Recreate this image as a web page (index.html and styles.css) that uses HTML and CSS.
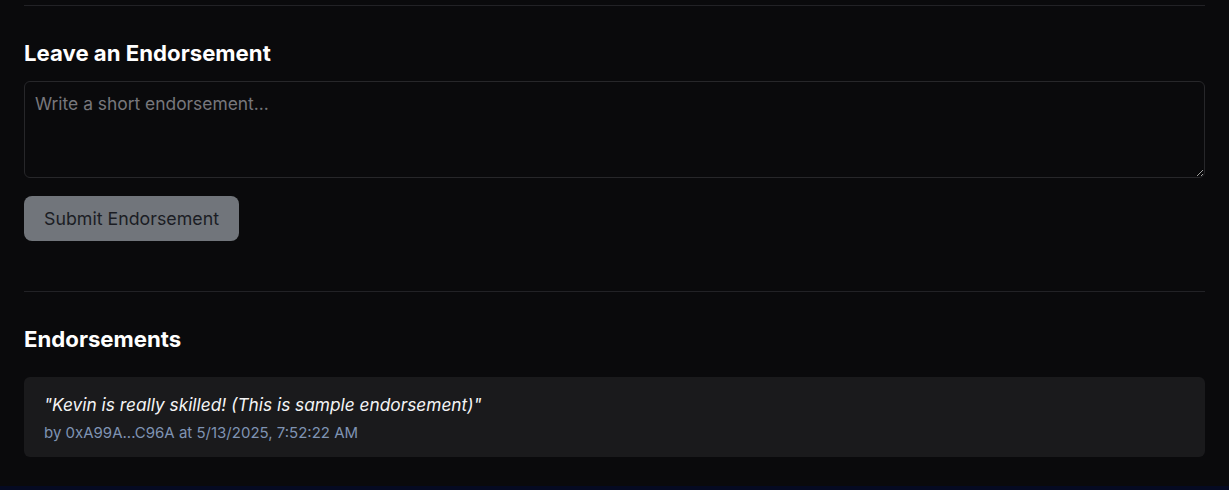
FILE: index.html
```html
<!DOCTYPE html>
<html lang="en">
<head>
<meta charset="utf-8">
<title>Endorsements</title>
<link rel="stylesheet" href="styles.css">
</head>
<body>
<main class="page">
  <section class="section section-form">
    <h2 class="heading">Leave an Endorsement</h2>
    <form class="form">
      <textarea class="input" placeholder="Write a short endorsement..."></textarea>
      <button type="button" class="btn" disabled>Submit Endorsement</button>
    </form>
  </section>
  <section class="section section-list">
    <h2 class="heading heading-list">Endorsements</h2>
    <div class="card">
      <p class="quote">"Kevin is really skilled! (This is sample endorsement)"</p>
      <p class="meta">by 0xA99A...C96A at 5/13/2025, 7:52:22 AM</p>
    </div>
  </section>
</main>
<footer class="footer"></footer>
</body>
</html>
```

FILE: styles.css
```css
* { box-sizing: border-box; }
html, body {
  margin: 0;
  background: #0a0a0c;
  color: #fafafa;
  font-family: Inter, "Noto Sans", sans-serif;
}
.page {
  padding: 5px 24px 0;
}
.section {
  border-top: 1px solid #222226;
}
.section-form {
  padding-top: 33px;
  padding-bottom: 50px;
}
.section-list {
  padding-top: 33px;
  padding-bottom: 29px;
}
.heading {
  margin: 0 0 14px;
  font-size: 22.2px;
  line-height: 28px;
  font-weight: 700;
  color: #ffffff;
}
.heading-list {
  margin-bottom: 24px;
}
.form {
  display: flex;
  flex-direction: column;
  align-items: flex-start;
  gap: 18px;
}
.input {
  display: block;
  width: 100%;
  height: 97px;
  padding: 10px 10px;
  background: #0a0a0c;
  border: 1px solid #27272a;
  border-radius: 6px;
  color: #e4e4e7;
  font-family: Inter, "Noto Sans", sans-serif;
  font-size: 17.4px;
  line-height: 24px;
  resize: vertical;
}
.input::placeholder { color: #77777c; }
.btn {
  height: 45px;
  padding: 0 20px;
  border: none;
  border-radius: 8px;
  background: #71757b;
  color: #1b1d24;
  font-family: Inter, "Noto Sans", sans-serif;
  font-size: 17.8px;
  line-height: 24px;
}
.card {
  background: #1a1a1c;
  border-radius: 6px;
  padding: 16px 20px 14px;
}
.quote {
  margin: 0 0 6px;
  font-style: italic;
  font-size: 17.3px;
  line-height: 24px;
  color: #f4f4f5;
}
.meta {
  margin: 0;
  font-size: 15px;
  line-height: 20px;
  color: #7f93b3;
}
.footer {
  height: 6px;
  background: #050a22;
}
```
